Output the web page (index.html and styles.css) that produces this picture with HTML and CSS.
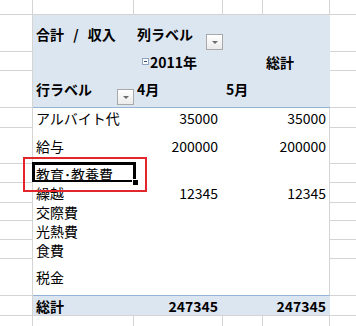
FILE: index.html
```html
<!DOCTYPE html>
<html>
<head>
  <title>ピボットテーブル</title>
  <link rel="stylesheet" href="styles.css">
</head>
<body>
  <div class="sheet">
    <!-- top edge row -->
    <div class="c g"></div>
    <div class="c g"></div>
    <div class="c g"></div>
    <div class="c g"></div>
    <div class="c g"></div>
    <div class="c gb"></div>

    <!-- pivot header -->
    <div class="c gl"></div>
    <div class="c head bold value-name">合計 / 収入</div>
    <div class="c head bold split">列ラベル <span class="filter"></span></div>
    <div class="c head"></div>
    <div class="c head"></div>
    <div class="c gb"></div>

    <div class="c gl"></div>
    <div class="c head"></div>
    <div class="c head bold year"><span class="collapse"></span>2011年</div>
    <div class="c head"></div>
    <div class="c head bold total-head">総計</div>
    <div class="c gb"></div>

    <div class="c gl"></div>
    <div class="c head bold split line-b">行ラベル <span class="filter"></span></div>
    <div class="c head bold line-b">4月</div>
    <div class="c head bold line-b month">5月</div>
    <div class="c head line-b"></div>
    <div class="c gb"></div>

    <!-- pivot body -->
    <div class="c gl"></div>
    <div class="c label">アルバイト代</div>
    <div class="c num">35000</div>
    <div class="c"></div>
    <div class="c num end">35000</div>
    <div class="c gb"></div>

    <div class="c gl"></div>
    <div class="c label">給与</div>
    <div class="c num">200000</div>
    <div class="c"></div>
    <div class="c num end">200000</div>
    <div class="c gb"></div>

    <div class="c gl"></div>
    <div class="c label selected">教育･教養費</div>
    <div class="c"></div>
    <div class="c"></div>
    <div class="c end"></div>
    <div class="c gb"></div>

    <div class="c gl"></div>
    <div class="c label">繰越</div>
    <div class="c num">12345</div>
    <div class="c"></div>
    <div class="c num end">12345</div>
    <div class="c gb"></div>

    <div class="c gl"></div>
    <div class="c label">交際費</div>
    <div class="c"></div>
    <div class="c"></div>
    <div class="c end"></div>
    <div class="c gb"></div>

    <div class="c gl"></div>
    <div class="c label">光熱費</div>
    <div class="c"></div>
    <div class="c"></div>
    <div class="c end"></div>
    <div class="c gb"></div>

    <div class="c gl"></div>
    <div class="c label">食費</div>
    <div class="c"></div>
    <div class="c"></div>
    <div class="c end"></div>
    <div class="c gb"></div>

    <div class="c gl"></div>
    <div class="c label line-b">税金</div>
    <div class="c line-b"></div>
    <div class="c line-b"></div>
    <div class="c end line-b"></div>
    <div class="c gb"></div>

    <!-- grand total -->
    <div class="c gl"></div>
    <div class="c head bold foot">総計</div>
    <div class="c head bold num foot">247345</div>
    <div class="c head foot"></div>
    <div class="c head bold num foot last">247345</div>
    <div class="c gb"></div>

    <!-- bottom edge row -->
    <div class="c g"></div>
    <div class="c g"></div>
    <div class="c g"></div>
    <div class="c g"></div>
    <div class="c g"></div>
    <div class="c"></div>

    <div class="mark"></div>
  </div>
</body>
</html>
```

FILE: styles.css
```css
body {
  margin: 0;
  padding: 0;
  background: #fff;
  font-family: "Noto Sans CJK JP", sans-serif;
  font-size: 14px;
  color: #000;
}

.sheet {
  position: relative;
  display: grid;
  grid-template-columns: 33px 101px 89px 40px 67px 1fr;
  grid-template-rows: 15px 37px 19px 37px 20px 36px 19px 20px 18px 19px 19px 37px 20px 20px;
  width: 356px;
  height: 326px;
  overflow: hidden;
}

.c {
  box-sizing: border-box;
  display: flex;
  align-items: center;
  padding: 0 3px;
  white-space: nowrap;
  min-width: 0;
}

/* plain worksheet gridlines */
.g {
  border-right: 1px solid #d4d4d4;
  border-bottom: 1px solid #d4d4d4;
}

.gl {
  border-right: 1px solid #d4d4d4;
  border-bottom: 1px solid #d4d4d4;
}

.gb {
  border-bottom: 1px solid #d4d4d4;
}

/* pivot table */
.head {
  background-color: #dce6f1;
}

.bold {
  font-weight: bold;
}

.value-name {
  word-spacing: 6px;
}

.line-b {
  border-bottom: 1px solid #95b3d7;
}

.foot {
  border-bottom: 1px solid #d4d4d4;
}

.split {
  justify-content: space-between;
  padding-right: 0;
}

.split .filter {
  align-self: flex-end;
  margin-bottom: 2px;
}

.year {
  padding-left: 8px;
}

.total-head,
.month,
.label {
  padding-left: 3px;
}

.num {
  justify-content: flex-end;
  padding-right: 5px;
}

.end {
  border-right: 1px solid #d4d4d4;
}

.end.num {
  padding-right: 3px;
}

.foot.last {
  padding-right: 4px;
}

/* filter dropdown button */
.filter {
  box-sizing: border-box;
  position: relative;
  width: 17px;
  height: 16px;
  border: 1px solid #a9a9a9;
  background: linear-gradient(#ffffff, #ebebeb);
}

.filter::after {
  content: "";
  position: absolute;
  left: 5px;
  top: 6px;
  border-left: 3px solid transparent;
  border-right: 3px solid transparent;
  border-top: 3px solid #6d6d6d;
}

/* collapse button in front of the year */
.collapse {
  box-sizing: border-box;
  position: relative;
  width: 7px;
  height: 7px;
  margin-right: 1px;
  border: 1px solid #8ea4c0;
  background: #fff;
}

.collapse::after {
  content: "";
  position: absolute;
  left: 1px;
  top: 2px;
  width: 3px;
  height: 1px;
  background: #30486c;
}

/* active cell */
.selected {
  position: relative;
  overflow: visible;
}

.selected::before {
  content: "";
  position: absolute;
  left: -1px;
  top: -2px;
  width: 104px;
  height: 20px;
  box-sizing: border-box;
  border: 3px solid #000;
  border-bottom-width: 2px;
}

.selected::after {
  content: "";
  position: absolute;
  left: 99px;
  top: 15px;
  width: 5px;
  height: 5px;
  background: #000;
  border: 1px solid #fff;
}

/* red marker around the cell */
.mark {
  position: absolute;
  left: 23px;
  top: 157px;
  width: 124px;
  height: 35px;
  box-sizing: border-box;
  border: 2px solid #e3262b;
}
```
